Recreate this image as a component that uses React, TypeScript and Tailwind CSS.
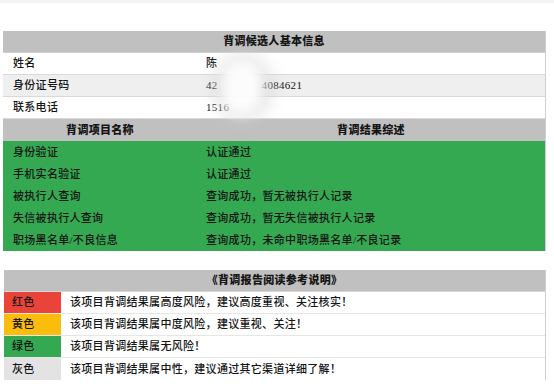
import React from "react";

const font = { fontFamily: '"Liberation Serif", "Noto Sans CJK SC", serif' };

function Row({ label, value, bg, children }: { label: string; value?: string; bg: string; children?: React.ReactNode }) {
  return (
    <div className={`grid grid-cols-[194px_1fr] h-[22px] items-center border-b border-[#d9d9d9] ${bg}`}>
      <div className="pl-[10px]">{label}</div>
      <div className="pl-[9px] relative">{children ?? value}</div>
    </div>
  );
}

function GreenRow({ label, value }: { label: string; value: string }) {
  return (
    <div className="grid grid-cols-[194px_1fr] h-[22px] items-center bg-[#35a852]">
      <div className="pl-[10px]">{label}</div>
      <div className="pl-[9px]">{value}</div>
    </div>
  );
}

function LegendRow({ label, bg, text, last }: { label: string; bg: string; text: string; last?: boolean }) {
  return (
    <div className={`grid grid-cols-[57px_1fr] h-[22px] ${last ? "" : "border-b border-[#e6e6e6]"}`}>
      <div className={`${bg} pl-[8px] flex items-center`}>{label}</div>
      <div className="pl-[9px] flex items-center bg-white">{text}</div>
    </div>
  );
}

export default function App() {
  return (
    <div className="w-[554px] h-[391px] bg-white relative overflow-hidden text-[11px] font-medium text-[#151515] tracking-[0.3px]" style={font}>
      <div className="h-[3px] bg-[#f2f2f2]" />
      <div className="ml-[3px] mt-[28px] w-[543px] border-r border-[#cfcfcf]">
        <div className="h-[22px] bg-[#c0c0c0] flex items-center justify-center font-black border-b border-[#d0d0d0]">背调候选人基本信息</div>
        <Row label="姓名" bg="bg-white">陈</Row>
        <Row label="身份证号码" bg="bg-[#efefef]">
          <span>42</span>
          <span className="ml-[44px]">4084621</span>
        </Row>
        <Row label="联系电话" bg="bg-white">1516</Row>
        <div className="grid grid-cols-[194px_1fr] h-[22px] items-center bg-[#c0c0c0] font-black">
          <div className="text-center">背调项目名称</div>
          <div className="text-center">背调结果综述</div>
        </div>
        <GreenRow label="身份验证" value="认证通过" />
        <GreenRow label="手机实名验证" value="认证通过" />
        <GreenRow label="被执行人查询" value="查询成功，暂无被执行人记录" />
        <GreenRow label="失信被执行人查询" value="查询成功，暂无失信被执行人记录" />
        <GreenRow label="职场黑名单/不良信息" value="查询成功，未命中职场黑名单/不良记录" />
      </div>
      <div className="absolute left-[214px] top-[54px] w-[58px] h-[66px] rounded-full bg-[#d4d4d4]/60 blur-[8px]" />
      <div className="absolute left-[222px] top-[60px] w-[40px] h-[54px] rounded-full bg-white/90 blur-[6px]" />

      <div className="ml-[4px] mt-[19px] w-[542px] border-r border-[#cfcfcf]">
        <div className="h-[22px] bg-[#c0c0c0] flex items-center justify-center font-black border-b border-[#d6d6d6]">《背调报告阅读参考说明》</div>
        <LegendRow label="红色" bg="bg-[#e9443a]" text="该项目背调结果属高度风险，建议高度重视、关注核实！" />
        <LegendRow label="黄色" bg="bg-[#fbbc0b]" text="该项目背调结果属中度风险，建议重视、关注！" />
        <LegendRow label="绿色" bg="bg-[#35a852]" text="该项目背调结果属无风险！" />
        <LegendRow label="灰色" bg="bg-[#e3e3e3]" text="该项目背调结果属中性，建议通过其它渠道详细了解！" last />
      </div>
    </div>
  );
}
